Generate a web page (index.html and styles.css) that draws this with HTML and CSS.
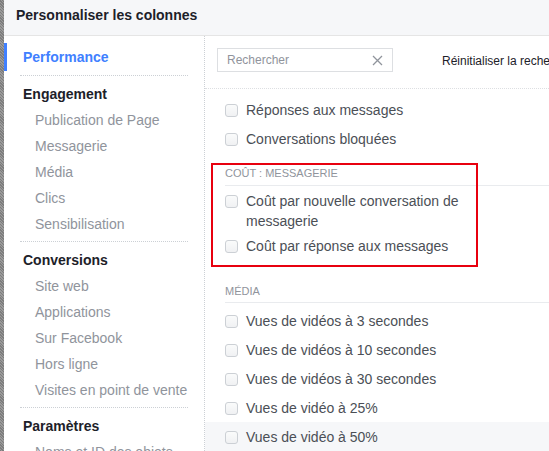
FILE: index.html
```html
<!DOCTYPE html>
<html lang="fr">
<head>
<meta charset="utf-8">
<title>Personnaliser les colonnes</title>
<link rel="stylesheet" href="styles.css">
</head>
<body>
<div class="backdrop"></div>
<div class="modal">
  <div class="modal-header">Personnaliser les colonnes</div>
  <div class="modal-body">
    <nav class="sidebar">
      <div class="nav-active">Performance</div>
      <div class="nav-group">
        <div class="nav-heading">Engagement</div>
        <div class="nav-item">Publication de Page</div>
        <div class="nav-item">Messagerie</div>
        <div class="nav-item">Média</div>
        <div class="nav-item">Clics</div>
        <div class="nav-item">Sensibilisation</div>
      </div>
      <div class="nav-group">
        <div class="nav-heading">Conversions</div>
        <div class="nav-item">Site web</div>
        <div class="nav-item">Applications</div>
        <div class="nav-item">Sur Facebook</div>
        <div class="nav-item">Hors ligne</div>
        <div class="nav-item">Visites en point de vente</div>
      </div>
      <div class="nav-group">
        <div class="nav-heading">Paramètres</div>
        <div class="nav-item">Noms et ID des objets</div>
      </div>
    </nav>
    <main class="main">
      <div class="toolbar">
        <div class="search">
          <span class="search-placeholder">Rechercher</span>
          <svg class="search-clear" width="11" height="11" viewBox="0 0 11 11"><path d="M1 1L10 10M10 1L1 10" stroke="#90949c" stroke-width="1.3" fill="none"/></svg>
        </div>
        <div class="reset">Réinitialiser la recherche</div>
      </div>
      <div class="list">
        <label class="row"><span class="box"></span><span class="label">Réponses aux messages</span></label>
        <label class="row"><span class="box"></span><span class="label">Conversations bloquées</span></label>

        <div class="section-title">Coût : Messagerie</div>
        <label class="row row-multi"><span class="box"></span><span class="label">Coût par nouvelle conversation de<br>messagerie</span></label>
        <label class="row"><span class="box"></span><span class="label">Coût par réponse aux messages</span></label>

        <div class="section-title section-title-lg">Média</div>
        <label class="row row-first"><span class="box"></span><span class="label">Vues de vidéos à 3 secondes</span></label>
        <label class="row"><span class="box"></span><span class="label">Vues de vidéos à 10 secondes</span></label>
        <label class="row"><span class="box"></span><span class="label">Vues de vidéos à 30 secondes</span></label>
        <label class="row"><span class="box"></span><span class="label">Vues de vidéo à 25%</span></label>
        <label class="row row-hover"><span class="box"></span><span class="label">Vues de vidéo à 50%</span></label>

        <div class="highlight"></div>
      </div>
    </main>
  </div>
</div>
</body>
</html>
```

FILE: styles.css
```css
* { box-sizing: border-box; }

html, body {
  margin: 0;
  padding: 0;
  height: 100%;
  overflow: hidden;
}

body {
  display: flex;
  font-family: "Liberation Sans", Arial, sans-serif;
  font-size: 14px;
  color: #1d2129;
  background: #fff;
}

.backdrop {
  width: 4px;
  flex: none;
  background: repeating-linear-gradient(45deg, #7d7d7d 0 1px, #9a9a9a 1px 2px);
}

.modal {
  flex: 1;
  display: flex;
  flex-direction: column;
  min-width: 0;
  background: #fff;
}

.modal-header {
  height: 36px;
  padding: 7px 12px 0;
  line-height: 16px;
  font-weight: bold;
  font-size: 14px;
  color: #1d2129;
  background: #f6f7f9;
  border-bottom: 1px solid #e5e5e5;
}

.modal-body {
  flex: 1;
  display: flex;
  min-height: 0;
}

.sidebar {
  width: 201px;
  flex: none;
  padding-top: 7px;
  border-right: 1px dotted #ccd0d5;
}

.nav-active {
  height: 28px;
  line-height: 28px;
  padding-left: 16px;
  font-weight: bold;
  color: #4080ff;
  border-left: 3px solid #4080ff;
  margin-bottom: 4px;
}

.nav-group {
  margin: 0 16px;
  padding: 5px 0 4px;
  border-top: 1px dotted #ccd0d5;
}

.nav-heading {
  line-height: 26px;
  padding-left: 3px;
  font-weight: bold;
  color: #1d2129;
}

.nav-item {
  line-height: 26px;
  padding-left: 15px;
  color: #90949c;
  white-space: nowrap;
}

.main {
  flex: 1;
  min-width: 0;
  display: flex;
  flex-direction: column;
}

.toolbar {
  height: 53px;
  flex: none;
  display: flex;
  align-items: flex-start;
  padding: 12px 0 0 12px;
  border-bottom: 1px dotted #dddfe2;
  white-space: nowrap;
  overflow: hidden;
}

.search {
  width: 176px;
  height: 24px;
  flex: none;
  display: flex;
  align-items: center;
  justify-content: space-between;
  padding: 0 9px 0 9px;
  border: 1px solid #dddfe2;
  font-size: 12px;
  color: #90949c;
}

.search-clear { display: block; }

.reset {
  margin-left: 49px;
  line-height: 26px;
  font-size: 12px;
  color: #1d2129;
}

.list {
  position: relative;
  flex: 1;
  padding-top: 6px;
}

.row {
  display: flex;
  align-items: flex-start;
  padding: 5px 0 4px 20px;
  line-height: 20px;
  color: #4b4f56;
  font-size: 14px;
  white-space: nowrap;
}

.row-multi { padding-bottom: 0; }
.row-first { margin-top: 3px; }
.row-hover { background: #f6f7f9; }

.box {
  width: 13px;
  height: 13px;
  flex: none;
  margin: 4px 8px 0 0;
  border: 1px solid #ccd0d5;
  border-radius: 3px;
  background: linear-gradient(#fafbfb, #f0f1f3);
}

.section-title {
  margin: 13px 0 0 20px;
  padding-bottom: 5px;
  line-height: 14px;
  font-size: 11px;
  text-transform: uppercase;
  color: #90949c;
  border-bottom: 1px solid #e9ebee;
}

.section-title-lg { margin-top: 24px; padding-bottom: 4px; }

.highlight {
  position: absolute;
  left: 6px;
  top: 74px;
  width: 267px;
  height: 104px;
  border: 2px solid #e8000f;
  pointer-events: none;
}
```
